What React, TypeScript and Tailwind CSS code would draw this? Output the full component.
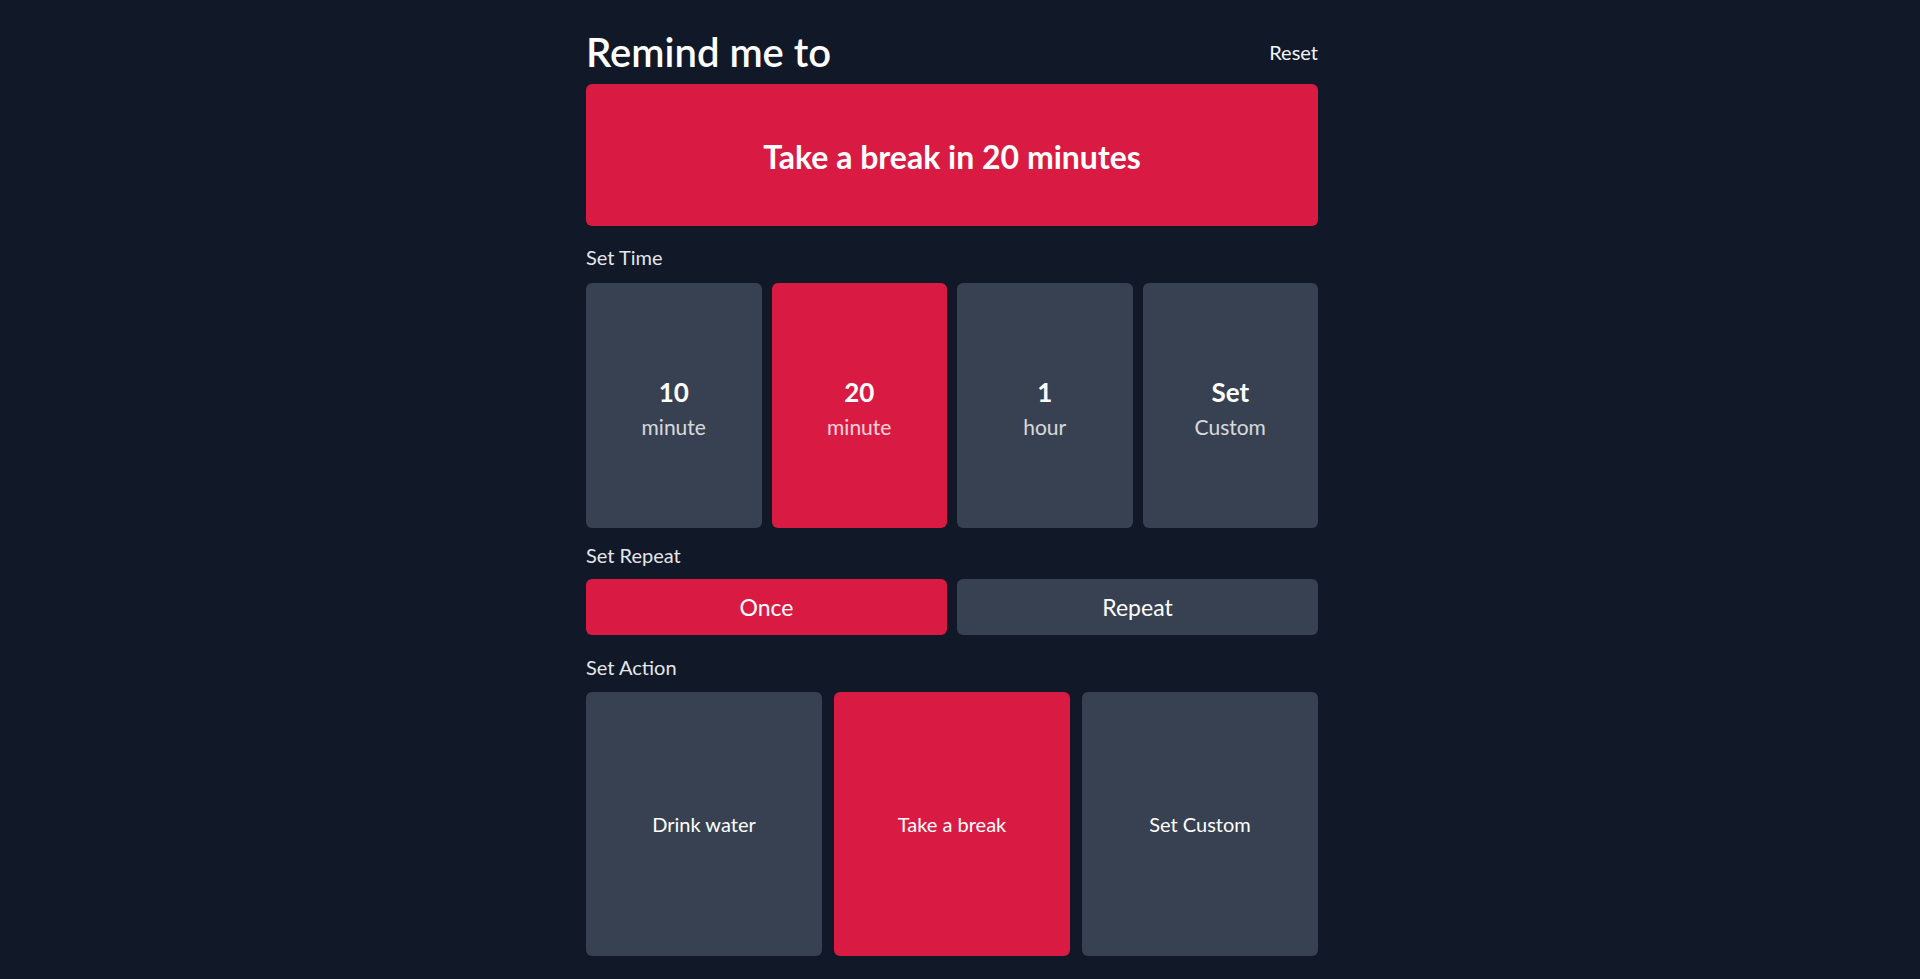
import { useState } from 'react';

const times = [
  { value: '10', unit: 'minute' },
  { value: '20', unit: 'minute' },
  { value: '1', unit: 'hour' },
  { value: 'Set', unit: 'Custom' },
];

const actions = ['Drink water', 'Take a break', 'Set Custom'];

export default function App() {
  const [time, setTime] = useState(1);
  const [repeat, setRepeat] = useState(false);
  const [action, setAction] = useState(1);

  const label = times[time].value === 'Set' ? 'later' : `in ${times[time].value} ${times[time].unit}${times[time].value === '1' ? '' : 's'}`;

  return (
    <div className="min-h-screen bg-[#111827] pr-4 font-['Lato','Liberation_Sans',sans-serif] text-white">
      <div className="mx-auto flex w-[732px] flex-col pb-6 pt-8">
        {/* header */}
        <div className="flex h-10 items-center justify-between">
          <h1 className="text-[40px] font-semibold leading-10">Remind me to</h1>
          <button className="text-xl text-gray-100">Reset</button>
        </div>

        {/* summary */}
        <div className="mt-3 flex h-[142px] items-center justify-center rounded-md bg-[#d91b44] pt-1">
          <span className="text-[32px] font-bold">
            {actions[action]} {label}
          </span>
        </div>

        <div className="mt-[17px] h-7 text-xl leading-7 text-gray-200">Set Time</div>
        <div className="mt-3 grid h-[245px] grid-cols-4 gap-2.5">
          {times.map((t, i) => (
            <button
              key={t.unit + t.value}
              onClick={() => setTime(i)}
              className={`flex flex-col items-center justify-center rounded-md pt-1 ${
                time === i ? 'bg-[#d91b44]' : 'bg-[#374151]'
              }`}
            >
              <span className="text-[26px] font-bold leading-9">{t.value}</span>
              <span className="mt-[3px] text-[21px] leading-7 text-white/80">{t.unit}</span>
            </button>
          ))}
        </div>

        <div className="mt-[13px] h-7 text-xl leading-7 text-gray-200">Set Repeat</div>
        <div className="mt-2.5 grid h-14 grid-cols-2 gap-2.5">
          <button
            onClick={() => setRepeat(false)}
            className={`rounded-md text-[23px] ${!repeat ? 'bg-[#d91b44]' : 'bg-[#374151]'}`}
          >
            Once
          </button>
          <button
            onClick={() => setRepeat(true)}
            className={`rounded-md text-[23px] ${repeat ? 'bg-[#d91b44]' : 'bg-[#374151]'}`}
          >
            Repeat
          </button>
        </div>

        <div className="mt-[18px] h-7 text-xl leading-7 text-gray-200">Set Action</div>
        <div className="mt-[11px] grid h-[264px] grid-cols-3 gap-3">
          {actions.map((a, i) => (
            <button
              key={a}
              onClick={() => setAction(i)}
              className={`flex items-center justify-center rounded-md text-xl ${
                action === i ? 'bg-[#d91b44]' : 'bg-[#374151]'
              }`}
            >
              {a}
            </button>
          ))}
        </div>
      </div>
    </div>
  );
}
